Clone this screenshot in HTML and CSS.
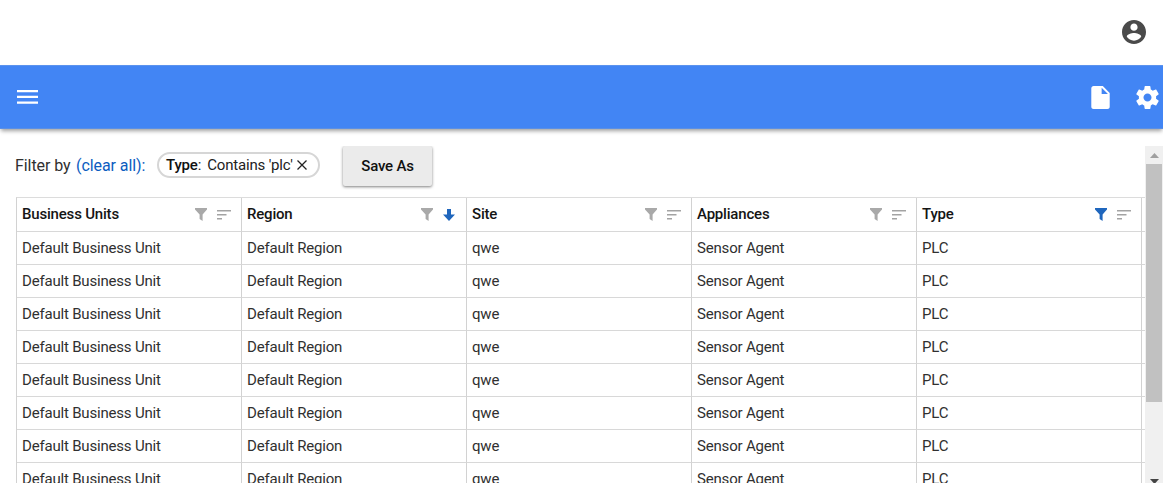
FILE: index.html
```html
<!DOCTYPE html>
<html lang="en">
<head>
<meta charset="utf-8">
<title>Devices</title>
<link rel="stylesheet" href="styles.css">
</head>
<body>
<svg class="sprite" aria-hidden="true">
  <symbol id="funnel" viewBox="0 0 12 13"><path d="M0 0h12v1.600L7.600 6.500V13L4.600 11V6.500L0 1.600z"/></symbol>
  <symbol id="sort" viewBox="0 0 14 10"><path d="M0 0h14v1.500H0zM0 4h9.500v1.500H0zM0 8h5v1.500H0z"/></symbol>
  <symbol id="down" viewBox="0 0 12 12"><path d="M4 0h4v5.500h4L6 12 0 5.500h4z"/></symbol>
</svg>
<header class="top">
  <svg class="account" viewBox="2 2 20 20"><path d="M12 2C6.480 2 2 6.480 2 12s4.480 10 10 10 10-4.480 10-10S17.520 2 12 2zm0 3c1.660 0 3 1.340 3 3s-1.340 3-3 3-3-1.340-3-3 1.340-3 3-3zm0 14.200c-2.500 0-4.710-1.280-6-3.220.030-1.990 4-3.080 6-3.080 1.990 0 5.970 1.090 6 3.080-1.290 1.940-3.500 3.220-6 3.220z"/></svg>
</header>
<nav class="bar">
  <svg class="menu" viewBox="0 0 21 14"><path d="M0 0h21v2.200H0zM0 5.800h21v2.200H0zM0 11.600h21v2.200H0z"/></svg>
  <svg class="file" viewBox="4 2 16 20"><path d="M6 2c-1.100 0-2 .9-2 2v16c0 1.100.9 2 2 2h12c1.100 0 2-.9 2-2V8l-6-6H6zm7 7V3.500L18.500 9H13z"/></svg>
  <svg class="gear" viewBox="2 2 20 20"><path d="M19.430 12.980c.040-.320.070-.640.070-.980s-.030-.660-.070-.980l2.110-1.650c.190-.150.240-.420.120-.640l-2-3.460c-.120-.220-.390-.300-.610-.220l-2.490 1c-.520-.400-1.080-.730-1.690-.980l-.380-2.650C14.460 2.180 14.250 2 14 2h-4c-.250 0-.460.180-.490.420l-.380 2.650c-.610.250-1.170.590-1.690.980l-2.490-1c-.230-.090-.490 0-.610.220l-2 3.460c-.130.220-.070.490.120.640l2.110 1.650c-.040.320-.070.650-.070.980s.030.660.070.980l-2.110 1.650c-.190.150-.240.420-.120.640l2 3.460c.120.220.390.300.610.220l2.490-1c.520.400 1.080.730 1.690.980l.380 2.650c.030.240.240.420.490.420h4c.250 0 .460-.180.490-.420l.380-2.650c.610-.250 1.170-.590 1.690-.980l2.490 1c.230.090.490 0 .610-.220l2-3.460c.120-.220.070-.490-.120-.640l-2.110-1.650zM12 15.500c-1.930 0-3.500-1.570-3.500-3.500s1.570-3.500 3.500-3.500 3.500 1.570 3.500 3.500-1.570 3.500-3.500 3.500z"/></svg>
</nav>
<main class="page">
  <section class="content">
    <div class="filters">
      <span class="label">Filter by</span>
      <a class="clear">(clear all):</a>
      <span class="chip"><span><b>Type</b>:</span><span class="value">Contains 'plc'</span><svg class="close" viewBox="0 0 10 10"><path d="M.5.5l9 9M9.500.5l-9 9"/></svg></span>
      <button class="save">Save As</button>
    </div>
    <div class="table">
      <div class="row head">
        <div class="cell"><span>Business Units</span><svg class="funnel"><use href="#funnel"/></svg><svg class="sort"><use href="#sort"/></svg></div>
        <div class="cell"><span>Region</span><svg class="funnel"><use href="#funnel"/></svg><svg class="down"><use href="#down"/></svg></div>
        <div class="cell"><span>Site</span><svg class="funnel"><use href="#funnel"/></svg><svg class="sort"><use href="#sort"/></svg></div>
        <div class="cell"><span>Appliances</span><svg class="funnel"><use href="#funnel"/></svg><svg class="sort"><use href="#sort"/></svg></div>
        <div class="cell"><span>Type</span><svg class="funnel active"><use href="#funnel"/></svg><svg class="sort"><use href="#sort"/></svg></div>
        <div class="cell"></div>
      </div>
      <div class="row"><div class="cell">Default Business Unit</div><div class="cell">Default Region</div><div class="cell">qwe</div><div class="cell">Sensor Agent</div><div class="cell">PLC</div><div class="cell"></div></div>
      <div class="row"><div class="cell">Default Business Unit</div><div class="cell">Default Region</div><div class="cell">qwe</div><div class="cell">Sensor Agent</div><div class="cell">PLC</div><div class="cell"></div></div>
      <div class="row"><div class="cell">Default Business Unit</div><div class="cell">Default Region</div><div class="cell">qwe</div><div class="cell">Sensor Agent</div><div class="cell">PLC</div><div class="cell"></div></div>
      <div class="row"><div class="cell">Default Business Unit</div><div class="cell">Default Region</div><div class="cell">qwe</div><div class="cell">Sensor Agent</div><div class="cell">PLC</div><div class="cell"></div></div>
      <div class="row"><div class="cell">Default Business Unit</div><div class="cell">Default Region</div><div class="cell">qwe</div><div class="cell">Sensor Agent</div><div class="cell">PLC</div><div class="cell"></div></div>
      <div class="row"><div class="cell">Default Business Unit</div><div class="cell">Default Region</div><div class="cell">qwe</div><div class="cell">Sensor Agent</div><div class="cell">PLC</div><div class="cell"></div></div>
      <div class="row"><div class="cell">Default Business Unit</div><div class="cell">Default Region</div><div class="cell">qwe</div><div class="cell">Sensor Agent</div><div class="cell">PLC</div><div class="cell"></div></div>
      <div class="row"><div class="cell">Default Business Unit</div><div class="cell">Default Region</div><div class="cell">qwe</div><div class="cell">Sensor Agent</div><div class="cell">PLC</div><div class="cell"></div></div>
    </div>
  </section>
  <aside class="scrollbar">
    <svg class="arrow" viewBox="0 0 9 5"><path d="M0 5L4.500 0 9 5z"/></svg>
    <div class="thumb"></div>
    <svg class="arrow end" viewBox="0 0 9 5"><path d="M0 0h9L4.500 5z"/></svg>
  </aside>
</main>
</body>
</html>
```
FILE: styles.css
```css
* { box-sizing: border-box; }
body {
  margin: 0;
  height: 483px;
  display: flex;
  flex-direction: column;
  overflow: hidden;
  background: #fff;
  color: #303030;
  font-family: Roboto, sans-serif;
  font-size: 15px;
  letter-spacing: -.19px;
}
svg { display: block; flex: none; }
.sprite { display: none; }
.top {
  flex: none;
  height: 65px;
  padding: 20px 17px 0 0;
  display: flex;
  justify-content: flex-end;
}
.account { width: 24px; height: 24px; fill: #4a4a4a; }
.bar {
  flex: none;
  height: 64px;
  display: flex;
  align-items: center;
  padding: 0 4px 0 17px;
  background: #4285f4;
  border-top: 1px solid #5b93ee;
  border-bottom: 1px solid #5b8fe4;
  box-shadow: 0 3px 4px -1px rgba(0, 0, 0, .38);
  fill: #fff;
}
.menu { width: 21px; height: 14px; margin-right: auto; }
.file { width: 19px; height: 23px; margin-right: 26px; }
.gear { width: 23px; height: 23px; }
.page {
  flex: 1;
  min-height: 0;
  display: flex;
  padding-top: 17px;
}
.content {
  width: 1145px;
  padding-left: 15px;
  overflow: hidden;
}
.filters {
  height: 51px;
  display: flex;
  align-items: flex-start;
  line-height: 40px;
  font-size: 16px;
  letter-spacing: -.08px;
}
.label { width: 61px; white-space: nowrap; }
.clear { width: 81px; color: #0b5cc0; white-space: nowrap; }
.chip {
  width: 163px;
  height: 26px;
  margin-top: 6px;
  padding-left: 7px;
  display: flex;
  align-items: center;
  border: 2px solid #d6d6d6;
  border-radius: 13px;
  font-size: 15px;
  letter-spacing: -.17px;
  line-height: 22px;
  color: #222;
  white-space: nowrap;
}
.chip b { font-weight: 500; color: #111; }
.value { margin: 0 4px 0 6px; }
.close { width: 10px; height: 10px; stroke: #222; stroke-width: 1.3; fill: none; }
.save {
  width: 89px;
  height: 40px;
  margin-left: 23px;
  padding: 0;
  border: 0;
  border-radius: 2px;
  background: #ebebeb;
  color: #111;
  font: 500 15px Roboto, sans-serif;
  letter-spacing: -.19px;
  box-shadow: 0 1px 3px rgba(0, 0, 0, .5);
}
.table {
  width: 1135px;
  margin-left: 1px;
  border-top: 1px solid #dcdcdc;
  border-left: 1px solid #d2d2d2;
}
.row {
  display: grid;
  grid-template-columns: repeat(5, 225px) 10px;
  height: 33px;
}
.cell {
  display: flex;
  align-items: center;
  padding: 0 10px 0 5px;
  border-right: 1px solid #d2d2d2;
  border-bottom: 1px solid #d8d8d8;
  line-height: 32px;
  white-space: nowrap;
}
.cell:last-child { padding: 0; }
.head { height: 34px; font-weight: 500; color: #151515; }
.head span { margin-right: auto; padding-bottom: 1px; }
.funnel { width: 12px; height: 13px; margin-right: 10px; fill: #a9a9a9; }
.active { fill: #1f66bd; }
.sort { width: 14px; height: 10px; fill: #a3a3a3; }
.down { width: 12px; height: 12px; margin-right: 1px; fill: #1f66bd; }
.scrollbar {
  width: 18px;
  display: flex;
  flex-direction: column;
  align-items: center;
  background: #f0f0f0;
}
.arrow { width: 9px; height: 5px; margin: 7px 0 6px; fill: #a0a0a0; }
.thumb { width: 16px; height: 238px; background: #c1c1c1; }
.end { margin: auto 0 -1px; fill: #444; }
```
